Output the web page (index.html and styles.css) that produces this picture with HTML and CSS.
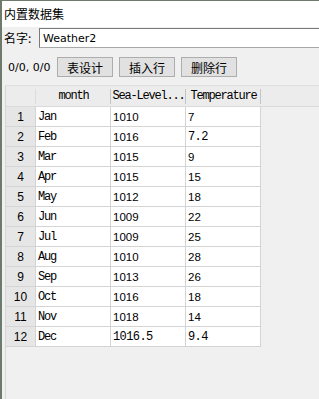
FILE: index.html
```html
<!DOCTYPE html>
<html lang="zh">
<head>
  <meta charset="UTF-8" />
  <meta name="viewport" content="width=device-width, initial-scale=1.0" />
  <title>内置数据集</title>
  <link rel="stylesheet" href="styles.css">
</head>
<body>
  <div class="window">
    <div class="title">内置数据集</div>

    <div class="name-row">
      <label for="name">名字:</label>
      <input id="name" type="text" value="Weather2">
    </div>

    <div class="tool-row">
      <span class="pos">0/0, 0/0</span>
      <button class="btn">表设计</button>
      <button class="btn">插入行</button>
      <button class="btn">删除行</button>
    </div>

    <div class="grid">
      <div class="head">
        <div class="hcell"></div>
        <div class="hcell">month</div>
        <div class="hcell">Sea-Level...</div>
        <div class="hcell">Temperature</div>
      </div>
      <div class="rows" id="rows"></div>
    </div>
  </div>

  <script>
    const data = [
      ["Jan", "1010", "7"],
      ["Feb", "1016", "7.2"],
      ["Mar", "1015", "9"],
      ["Apr", "1015", "15"],
      ["May", "1012", "18"],
      ["Jun", "1009", "22"],
      ["Jul", "1009", "25"],
      ["Aug", "1010", "28"],
      ["Sep", "1013", "26"],
      ["Oct", "1016", "18"],
      ["Nov", "1018", "14"],
      ["Dec", "1016.5", "9.4"]
    ];

    const rows = document.getElementById("rows");

    // integers show in the sans font, decimals in the mono one
    function numClass(v) {
      return v.includes(".") ? "cell dec" : "cell num";
    }

    data.forEach((item, i) => {
      const row = document.createElement("div");
      row.className = "row";
      row.innerHTML = `
        <div class="rnum">${i + 1}</div>
        <div class="cell">${item[0]}</div>
        <div class="${numClass(item[1])}">${item[1]}</div>
        <div class="${numClass(item[2])}">${item[2]}</div>
      `;
      rows.appendChild(row);
    });
  </script>
</body>
</html>
```

FILE: styles.css
```css
* { box-sizing: border-box; margin: 0; padding: 0; }
html, body { height: 100%; }
body {
  font-family: "Noto Sans CJK SC", "DejaVu Sans", sans-serif;
  font-size: 12px;
  background: #f0f0f0;
  color: #000;
  overflow: hidden;
}
.window {
  height: 100%;
  border-left: 2px solid #6c7b6c;
  border-top: 1px solid #6c7b6c;
  display: flex;
  flex-direction: column;
}
.title {
  height: 26px;
  line-height: 25px;
  padding-left: 2px;
  background: #fff;
}
.name-row {
  display: flex;
  align-items: center;
  margin-top: 1px;
  padding-left: 2px;
}
.name-row label {
  width: 35px;
  line-height: 20px;
}
.name-row input {
  flex: 1;
  height: 20px;
  margin-right: -4px;
  border: 1px solid #7a7a7a;
  border-bottom-color: #a8a8a8;
  background: #fff;
  padding: 0 3px;
  font-family: "DejaVu Sans", sans-serif;
  font-size: 11px;
  color: #000;
  outline: none;
}
.tool-row {
  display: flex;
  align-items: center;
  gap: 6px;
  margin-top: 9px;
  padding-left: 6px;
}
.pos {
  width: 43px;
  font-family: "DejaVu Sans", sans-serif;
  font-size: 11px;
}
.btn {
  width: 56px;
  height: 20px;
  background: #e1e1e1;
  border: 1px solid #adadad;
  font-family: "Noto Sans CJK SC", sans-serif;
  font-size: 12px;
  line-height: 17px;
  color: #000;
}
.grid {
  flex: 1;
  margin-top: 8px;
  margin-left: 3px;
  border-left: 1px solid #d6d6d6;
}
.head, .row {
  display: grid;
  grid-template-columns: 30px 75px 75px 75px;
}
.head {
  height: 22px;
  background: #ececec;
  border-top: 1px solid #e0e0e0;
  border-bottom: 1px solid #dadada;
}
.hcell {
  position: relative;
  text-align: center;
  line-height: 21px;
  font-family: "Liberation Mono", monospace;
  font-size: 12px;
  letter-spacing: -1.2px;
  white-space: nowrap;
  overflow: hidden;
}
.hcell::after {
  content: "";
  position: absolute;
  right: 0;
  top: 3px;
  height: 15px;
  border-right: 1px solid #c4c4c4;
}
.hcell:first-child::after { border-right-color: #dcdcdc; }
.row {
  height: 20px;
}
.rnum, .cell {
  border-right: 1px solid #d4d4d4;
  border-bottom: 1px solid #d4d4d4;
  line-height: 21px;
  white-space: nowrap;
  overflow: hidden;
}
.rnum {
  background: #e6e6e6;
  text-align: center;
  font-family: "Liberation Sans", sans-serif;
  font-size: 12px;
}
.cell {
  background: #fff;
  padding-left: 2px;
  font-family: "Liberation Mono", monospace;
  font-size: 12px;
  letter-spacing: -1.2px;
}
.cell.dec {
  letter-spacing: -0.6px;
}
.cell.num {
  font-family: "Liberation Sans", sans-serif;
  font-size: 11.5px;
  letter-spacing: 0;
}
```
